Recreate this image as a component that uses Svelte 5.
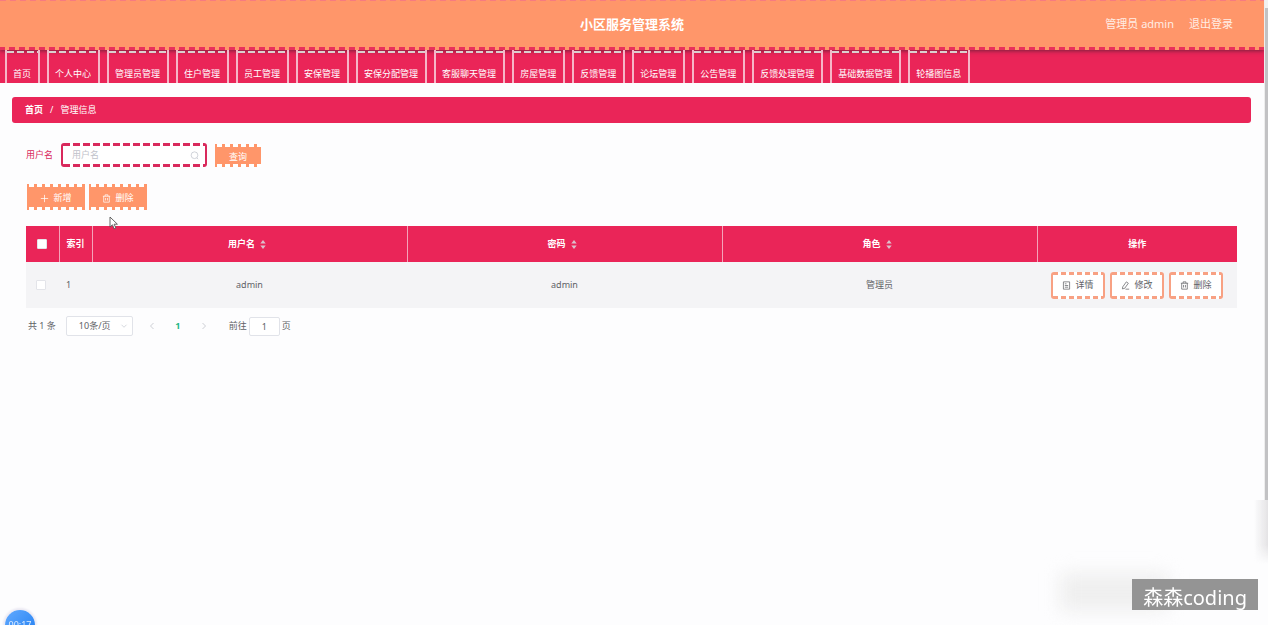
<script>
  const tabs = ['首页', '个人中心', '管理员管理', '住户管理', '员工管理', '安保管理', '安保分配管理', '客服聊天管理', '房屋管理', '反馈管理', '论坛管理', '公告管理', '反馈处理管理', '基础数据管理', '轮播图信息'];
  const columns = ['用户名', '密码', '角色'];
  const rows = [{ id: 1, values: ['admin', 'admin', '管理员'] }];
</script>

{#snippet trash()}
  <svg class="icon" viewBox="0 0 16 16" aria-hidden="true"><path d="M1.5 4h13M5.5 4V1.5h5V4M3 4v10.5h10V4M6.3 7v4.5M9.7 7v4.5" /></svg>
{/snippet}

<div class="page">
  <header>
    <h1>小区服务管理系统</h1>
    <div class="account">
      <span>管理员 admin</span>
      <a href="#logout">退出登录</a>
    </div>
  </header>

  <nav class="tabs">
    {#each tabs as tab}
      <a href="#tab">{tab}</a>
    {/each}
  </nav>

  <main>
    <div class="crumbs"><b>首页</b><span>/</span><span>管理信息</span></div>

    <section>
      <form class="search" onsubmit={(e) => e.preventDefault()}>
        <label for="username">用户名</label>
        <div class="field">
          <input id="username" type="text" placeholder="用户名" />
          <svg class="icon" viewBox="0 0 16 16" aria-hidden="true"><circle cx="8" cy="7.5" r="6" /><path d="M12 12l2.5 2.5" /></svg>
        </div>
        <button class="solid query" type="submit">查询</button>
      </form>

      <div class="actions">
        <button class="solid" type="button">
          <svg class="icon" viewBox="0 0 16 16" aria-hidden="true"><path d="M8 1.5v13M1.5 8h13" /></svg>新增
        </button>
        <button class="solid" type="button">{@render trash()}删除</button>
      </div>

      <table>
        <colgroup>
          <col class="narrow" /><col class="narrow" /><col /><col /><col /><col class="ops" />
        </colgroup>
        <thead>
          <tr>
            <th><input type="checkbox" aria-label="全选" /></th>
            <th>索引</th>
            {#each columns as column}
              <th>
                <span class="sortable">{column}<svg viewBox="0 0 6 10" aria-hidden="true"><path d="M0 4l3-4 3 4zM0 6h6l-3 4z" /></svg></span>
              </th>
            {/each}
            <th>操作</th>
          </tr>
        </thead>
        <tbody>
          {#each rows as row}
            <tr>
              <td><input type="checkbox" aria-label="选择" /></td>
              <td class="index">{row.id}</td>
              {#each row.values as value}<td>{value}</td>{/each}
              <td>
                <div class="rowops">
                  <button class="outline" type="button">
                    <svg class="icon" viewBox="0 0 16 16" aria-hidden="true"><path d="M2.5 1.5h11v13h-11zM5 5h3M5 8h6M5 11h6" /></svg>详情
                  </button>
                  <button class="outline" type="button">
                    <svg class="icon" viewBox="0 0 16 16" aria-hidden="true"><path d="M3 10.5L9.5 1.5l3.5 2.5-6.5 9L2.5 14zM8 14.5h6.5" /></svg>修改
                  </button>
                  <button class="outline" type="button">{@render trash()}删除</button>
                </div>
              </td>
            </tr>
          {/each}
        </tbody>
      </table>

      <div class="pager">
        <span>共 1 条</span>
        <div class="size">
          <select aria-label="每页条数"><option>10条/页</option></select>
          <svg class="icon" viewBox="0 0 16 16" aria-hidden="true"><path d="M3 5.5l5 5 5-5" /></svg>
        </div>
        <button type="button" aria-label="上一页"><svg class="icon" viewBox="0 0 16 16"><path d="M11 2L5 8l6 6" /></svg></button>
        <button type="button" class="current">1</button>
        <button type="button" aria-label="下一页"><svg class="icon" viewBox="0 0 16 16"><path d="M5 2l6 6-6 6" /></svg></button>
        <label class="jump">前往<input type="text" value="1" />页</label>
      </div>
    </section>
  </main>
</div>

<div class="scrollbar"></div>
<div class="edge"></div>
<div class="haze"></div>
<div class="watermark">森森coding</div>
<div class="timer">00:17</div>
<svg class="cursor" viewBox="0 0 10 14" aria-hidden="true"><path d="M1 1v10l2.4-2.2 1.8 4 1.7-.8-1.8-3.8h3.3z" /></svg>

<style>
  :global(body) {
    background: #fdfdfe;
    font: 9px/14px 'Noto Sans', 'Noto Sans CJK SC', sans-serif;
    color: #606266;
  }
  .page {
    --pink: #ea2558;
    --orange: #ff966a;
    margin-right: 4px;
  }
  button, input, select {
    font: inherit;
    color: inherit;
    margin: 0;
    padding: 0;
    border: 0;
    box-sizing: border-box;
  }
  a { color: inherit; text-decoration: none; }
  .icon {
    width: 9px;
    height: 9px;
    fill: none;
    stroke: currentColor;
    stroke-width: 1.3;
    flex: none;
  }

  header {
    position: relative;
    box-sizing: border-box;
    height: 50px;
    display: grid;
    grid-template-columns: 1fr auto 1fr;
    align-items: center;
    padding: 0 31px 3px;
    color: #fff;
    background:
      repeating-linear-gradient(90deg, #e9305c 0 6px, transparent 6px 10px) -1px 100% / 101% 3px no-repeat,
      repeating-linear-gradient(90deg, #f77b80 0 6px, transparent 6px 10px) 0 0 / 100% 1px no-repeat,
      var(--orange);
    box-shadow: 0 1px 4px rgba(70, 30, 50, 0.7);
  }
  h1 {
    grid-column: 2;
    margin: 0;
    font-size: 13px;
    line-height: 20px;
  }
  .account {
    display: flex;
    justify-content: flex-end;
    gap: 15px;
    font-size: 11px;
    color: #ffede5;
  }

  .tabs {
    display: flex;
    gap: 7px;
    height: 33px;
    padding-left: 5px;
    background: var(--pink);
    color: #fff;
  }
  .tabs a {
    position: relative;
    padding: 17px 7px 0 6px;
    border: solid #f6b6c8;
    border-width: 0 2px;
    white-space: nowrap;
    background: repeating-linear-gradient(90deg, #dbd0d0 0 7px, transparent 7px 10px) 0 1px / 100% 2px no-repeat;
  }

  main { padding: 14px 13px 0 12px; }
  .crumbs {
    display: flex;
    gap: 7px;
    padding: 6px 13px;
    border-radius: 3px;
    background: var(--pink);
    color: #fff;
  }
  section { padding: 20px 14px 0; }
  .search { display: flex; align-items: center; color: #d9295c; }
  .field {
    display: flex;
    align-items: center;
    box-sizing: border-box;
    width: 146px;
    height: 24px;
    margin: 0 8px;
    padding: 0 6px 0 9px;
    border: solid #d9295c;
    border-width: 0 2px;
    border-radius: 3px;
    background:
      repeating-linear-gradient(90deg, #d9295c 0 7px, transparent 7px 10px) 0 0 / 100% 3px no-repeat,
      repeating-linear-gradient(90deg, #d9295c 0 7px, transparent 7px 10px) 0 100% / 100% 3px no-repeat,
      #fff;
  }
  .field input { width: 100%; min-width: 0; outline: 0; background: none; }
  .field input::placeholder { color: #bfc2ca; }
  .field .icon { color: #c0c4cc; }
  button {
    display: flex;
    align-items: center;
    justify-content: center;
    gap: 4px;
    background: none;
  }
  .solid {
    width: 58px;
    height: 26px;
    color: #fff;
    background:
      repeating-linear-gradient(90deg, #fff 0 5px, transparent 5px 8px) 2px 0 / 100% 3px no-repeat,
      repeating-linear-gradient(90deg, #fff 0 5px, transparent 5px 8px) 2px 100% / 100% 3px no-repeat,
      var(--orange);
  }
  .query { width: 46px; height: 23px; padding-top: 3px; }
  .actions { display: flex; gap: 4px; margin: 17px 1px 16px; }
  .actions button { padding-top: 2px; }

  table {
    width: 100%;
    border-collapse: collapse;
    table-layout: fixed;
    text-align: center;
  }
  .narrow { width: 33px; }
  .ops { width: 200px; }
  th, td { padding: 0; }
  th {
    height: 36px;
    background: var(--pink);
    color: #fff;
    border-right: 1px solid #f4a3b9;
  }
  th:last-child { border-right: 0; }
  td { height: 46px; background: #f4f4f6; }
  .index { padding-right: 14px; }
  .sortable { display: inline-flex; align-items: center; gap: 4px; padding-right: 4px; }
  .sortable svg { width: 8px; height: 9px; fill: #dcc0cb; }
  table input {
    display: block;
    appearance: none;
    width: 10px;
    height: 10px;
    margin: 0 auto;
    border: 1px solid #e3e4e9;
    border-radius: 1px;
    background: #fff;
  }
  td input { margin-left: 10px; }
  .rowops { display: flex; justify-content: center; gap: 5px; }
  .outline {
    width: 54px;
    height: 27px;
    border: solid #f8a183;
    border-width: 0 2px;
    border-radius: 3px;
    background:
      repeating-linear-gradient(90deg, #f8a183 0 5px, transparent 5px 8px) 0 0 / 100% 3px no-repeat,
      repeating-linear-gradient(90deg, #f8a183 0 5px, transparent 5px 8px) 0 100% / 100% 3px no-repeat,
      #fff;
  }

  .pager { display: flex; align-items: center; padding: 8px 2px; }
  .pager button { width: 26px; height: 19px; color: #b2b5bc; }
  .pager .icon { width: 8px; height: 8px; }
  .pager .current { color: #22b785; font-weight: 700; }
  .size {
    display: flex;
    align-items: center;
    box-sizing: border-box;
    width: 67px;
    height: 20px;
    margin: 0 6px 0 10px;
    padding: 0 4px 0 12px;
    border: 1px solid #e1e3e9;
    border-radius: 2px;
    background: #fff;
  }
  .size select { flex: 1; min-width: 0; appearance: none; background: none; }
  .size .icon { color: #c0c4cc; }
  .jump { display: flex; align-items: center; gap: 2px; margin-left: 12px; }
  .jump input {
    width: 31px;
    height: 19px;
    text-align: center;
    border: 1px solid #e1e3e9;
    border-radius: 2px;
    background: #fff;
  }

  .scrollbar {
    position: fixed;
    top: 0;
    right: 0;
    width: 4px;
    height: 80vh;
    box-sizing: border-box;
    border-left: 1px solid #eee;
    background: linear-gradient(#f1f1f1 8px, #c2c2c4 8px);
  }
  .edge {
    position: fixed;
    right: 0;
    top: 80vh;
    width: 14px;
    height: 64px;
    background: linear-gradient(90deg, transparent, #e4e3e5);
    mask-image: linear-gradient(#000 70%, transparent);
  }
  .haze {
    position: fixed;
    right: 100px;
    bottom: 14px;
    width: 108px;
    height: 38px;
    background: #efefef;
    filter: blur(9px);
  }
  .watermark {
    position: fixed;
    right: 10px;
    bottom: 15px;
    padding: 7px 11px 0;
    font-size: 20px;
    line-height: 24px;
    color: #fff;
    background: #949494;
  }
  .timer {
    position: fixed;
    left: 5px;
    bottom: -15px;
    width: 30px;
    height: 30px;
    border-radius: 50%;
    background: linear-gradient(135deg, #62aaff, #1f7df0);
    box-shadow: 0 0 2px 2px #ebe9f3;
    color: #dcecff;
    line-height: 30px;
    text-align: center;
  }
  .cursor {
    position: fixed;
    left: 109px;
    top: 216px;
    width: 10px;
    height: 14px;
    fill: #fff;
    stroke: #555;
    stroke-width: 0.9;
  }
</style>
